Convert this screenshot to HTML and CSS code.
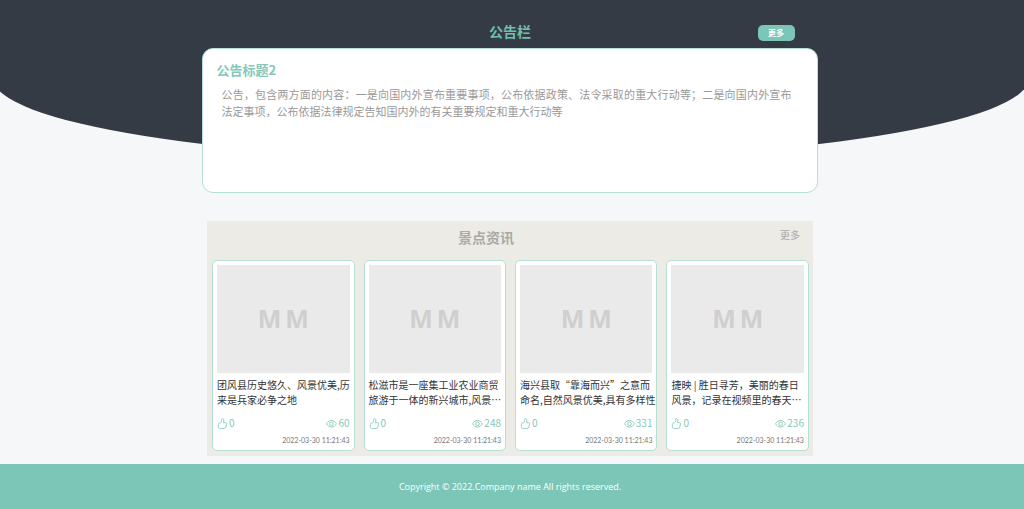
FILE: index.html
```html
<!DOCTYPE html>
<html lang="zh-CN">
<head>
<meta charset="utf-8">
<title>景点资讯</title>
<link rel="stylesheet" href="styles.css">
</head>
<body>
<svg class="sprite" aria-hidden="true">
  <symbol id="thumb" viewBox="0 0 20 20"><path d="M6 9C8.300 7.300 9 5 8.200 2.500c0-2 3.600-2 4.200.5.300 1.500-.2 3.500-.9 5.500h4c1.600 0 2.300 1 1.900 2.400l-1.400 5.700c-.4 1.500-1.500 2.400-3 2.400H6c-2.200 0-3.500-1-3.500-3v-4c0-1.800 1-3 3.500-3z"/></symbol>
  <symbol id="eye" viewBox="0 0 20 20"><path d="M1 10.500c2.300-4 5.500-6 9-6s6.700 2 9 6c-2.300 4-5.500 6-9 6s-6.700-2-9-6z"/><circle cx="10" cy="10.500" r="3.400"/></symbol>
</svg>
<main class="main">
  <section class="notice">
    <header class="notice-head">
      <h2 class="notice-heading">公告栏</h2>
      <button class="notice-more" type="button">更多</button>
    </header>
    <article class="notice-card">
      <h3 class="notice-title">公告标题2</h3>
      <p class="notice-text">公告，包含两方面的内容：一是向国内外宣布重要事项，公布依据政策、法令采取的重大行动等；二是向国内外宣布法定事项，公布依据法律规定告知国内外的有关重要规定和重大行动等</p>
    </article>
  </section>
  <section class="news">
    <header class="news-head">
      <h2 class="news-heading">景点资讯</h2>
      <a class="news-more" href="#">更多</a>
    </header>
    <div class="news-list">
      <article class="card">
        <div class="thumb"><span>M</span><span>M</span></div>
        <h3 class="card-title">团风县历史悠久、风景优美,历来是兵家必争之地</h3>
        <div class="stats"><span class="stat"><svg class="icon"><use href="#thumb"/></svg>0</span><span class="stat"><svg class="icon"><use href="#eye"/></svg>60</span></div>
        <time class="date">2022-03-30 11:21:43</time>
      </article>
      <article class="card">
        <div class="thumb"><span>M</span><span>M</span></div>
        <h3 class="card-title">松滋市是一座集工业农业商贸旅游于一体的新兴城市,风景…</h3>
        <div class="stats"><span class="stat"><svg class="icon"><use href="#thumb"/></svg>0</span><span class="stat"><svg class="icon"><use href="#eye"/></svg>248</span></div>
        <time class="date">2022-03-30 11:21:43</time>
      </article>
      <article class="card">
        <div class="thumb"><span>M</span><span>M</span></div>
        <h3 class="card-title">海兴县取“靠海而兴”之意而命名,自然风景优美,具有多样性</h3>
        <div class="stats"><span class="stat"><svg class="icon"><use href="#thumb"/></svg>0</span><span class="stat"><svg class="icon"><use href="#eye"/></svg>331</span></div>
        <time class="date">2022-03-30 11:21:43</time>
      </article>
      <article class="card">
        <div class="thumb"><span>M</span><span>M</span></div>
        <h3 class="card-title">捷映 | 胜日寻芳，美丽的春日风景，记录在视频里的春天…</h3>
        <div class="stats"><span class="stat"><svg class="icon"><use href="#thumb"/></svg>0</span><span class="stat"><svg class="icon"><use href="#eye"/></svg>236</span></div>
        <time class="date">2022-03-30 11:21:43</time>
      </article>
    </div>
  </section>
</main>
<footer class="footer">Copyright © 2022.Company name All rights reserved.</footer>
</body>
</html>
```
FILE: styles.css
```css
* { box-sizing: border-box; }
body {
  margin: 0;
  min-height: 100vh;
  display: flex;
  flex-direction: column;
  background: #f5f7f9;
  font-family: "Noto Sans CJK SC", sans-serif;
  font-size: 10px;
}
h2, h3, p { margin: 0; }
.sprite { display: none; }
.main {
  position: relative;
  flex: 1;
  padding: 0 4px 8px 0;
  overflow: hidden;
}
.main::before {
  content: "";
  position: absolute;
  top: 0;
  left: -7px;
  right: -5px;
  height: 160px;
  background: #353b45;
  border-radius: 0 0 50% 50% / 0 0 82px 82px;
}
.notice {
  position: relative;
  width: 60.3%;
  margin: 0 auto;
}
.notice-head {
  display: grid;
  grid-template-columns: 1fr auto 1fr;
  align-items: start;
  padding: 15px 23px 0;
  height: 48px;
}
.notice-heading {
  grid-column: 2;
  color: #6fbfae;
  font-size: 14px;
  line-height: 32px;
}
.notice-more {
  justify-self: end;
  width: 37px;
  height: 16px;
  margin-top: 10px;
  padding: 0;
  border: 0;
  border-radius: 5px;
  background: #7cc6b8;
  color: #fff;
  font: bold 8px/16px "Noto Sans CJK SC", sans-serif;
}
.notice-card {
  min-height: 145px;
  padding: 12px 13px;
  border: 1px solid #b4e0d6;
  border-radius: 11px;
  background: #fff;
}
.notice-title {
  color: #85c8ba;
  font-size: 13px;
  line-height: 18px;
}
.notice-text {
  padding: 7px 12px 0 5px;
  color: #999;
  font-size: 11px;
  line-height: 17px;
  text-align: justify;
}
.news {
  position: relative;
  width: 59.4%;
  margin: 28px auto 0;
  padding: 0 4px 5px 5px;
  background: #ecebe5;
}
.news-head {
  display: grid;
  grid-template-columns: 1fr auto 1fr;
  padding: 4px 9px 0 0;
  height: 39px;
}
.news-heading {
  grid-column: 2;
  margin-left: -40px;
  color: #aaa9a5;
  font-size: 14px;
  line-height: 24px;
}
.news-more {
  justify-self: end;
  color: #aaa9a5;
  line-height: 20px;
  text-decoration: none;
}
.news-list {
  display: grid;
  grid-template-columns: repeat(4, minmax(0, 1fr));
  gap: 9px;
}
.card {
  display: flex;
  flex-direction: column;
  height: 191px;
  border: 1px solid #b4e0d6;
  border-radius: 5px;
  background: #fff;
}
.thumb {
  display: flex;
  justify-content: center;
  gap: 4px;
  height: 108px;
  margin: 4px 4px 0;
  background: #eaeaea;
  color: #cfcfcf;
  font: bold 25px/106px "Open Sans", sans-serif;
}
.card-title {
  height: 30px;
  margin-top: 4px;
  padding-left: 4px;
  color: #333;
  font-size: 10px;
  font-weight: 400;
  line-height: 15px;
}
.stats {
  display: flex;
  justify-content: space-between;
  margin-top: 8px;
  padding: 0 4px;
  color: #85c8ba;
  line-height: 16px;
}
.stat {
  display: flex;
  align-items: center;
  gap: 1px;
}
.icon {
  width: 11px;
  height: 11px;
  fill: none;
  stroke: #85c8ba;
  stroke-width: 1.6;
}
.date {
  margin-top: 4px;
  padding: 0 4px;
  color: #777;
  font-family: Lato, sans-serif;
  font-size: 7px;
  line-height: 10px;
  text-align: right;
}
.footer {
  padding: 15px 4px 15px 0;
  background: #7cc6b8;
  color: #fff;
  font-family: "Open Sans", sans-serif;
  font-size: 9px;
  line-height: 15px;
  text-align: center;
}
```
